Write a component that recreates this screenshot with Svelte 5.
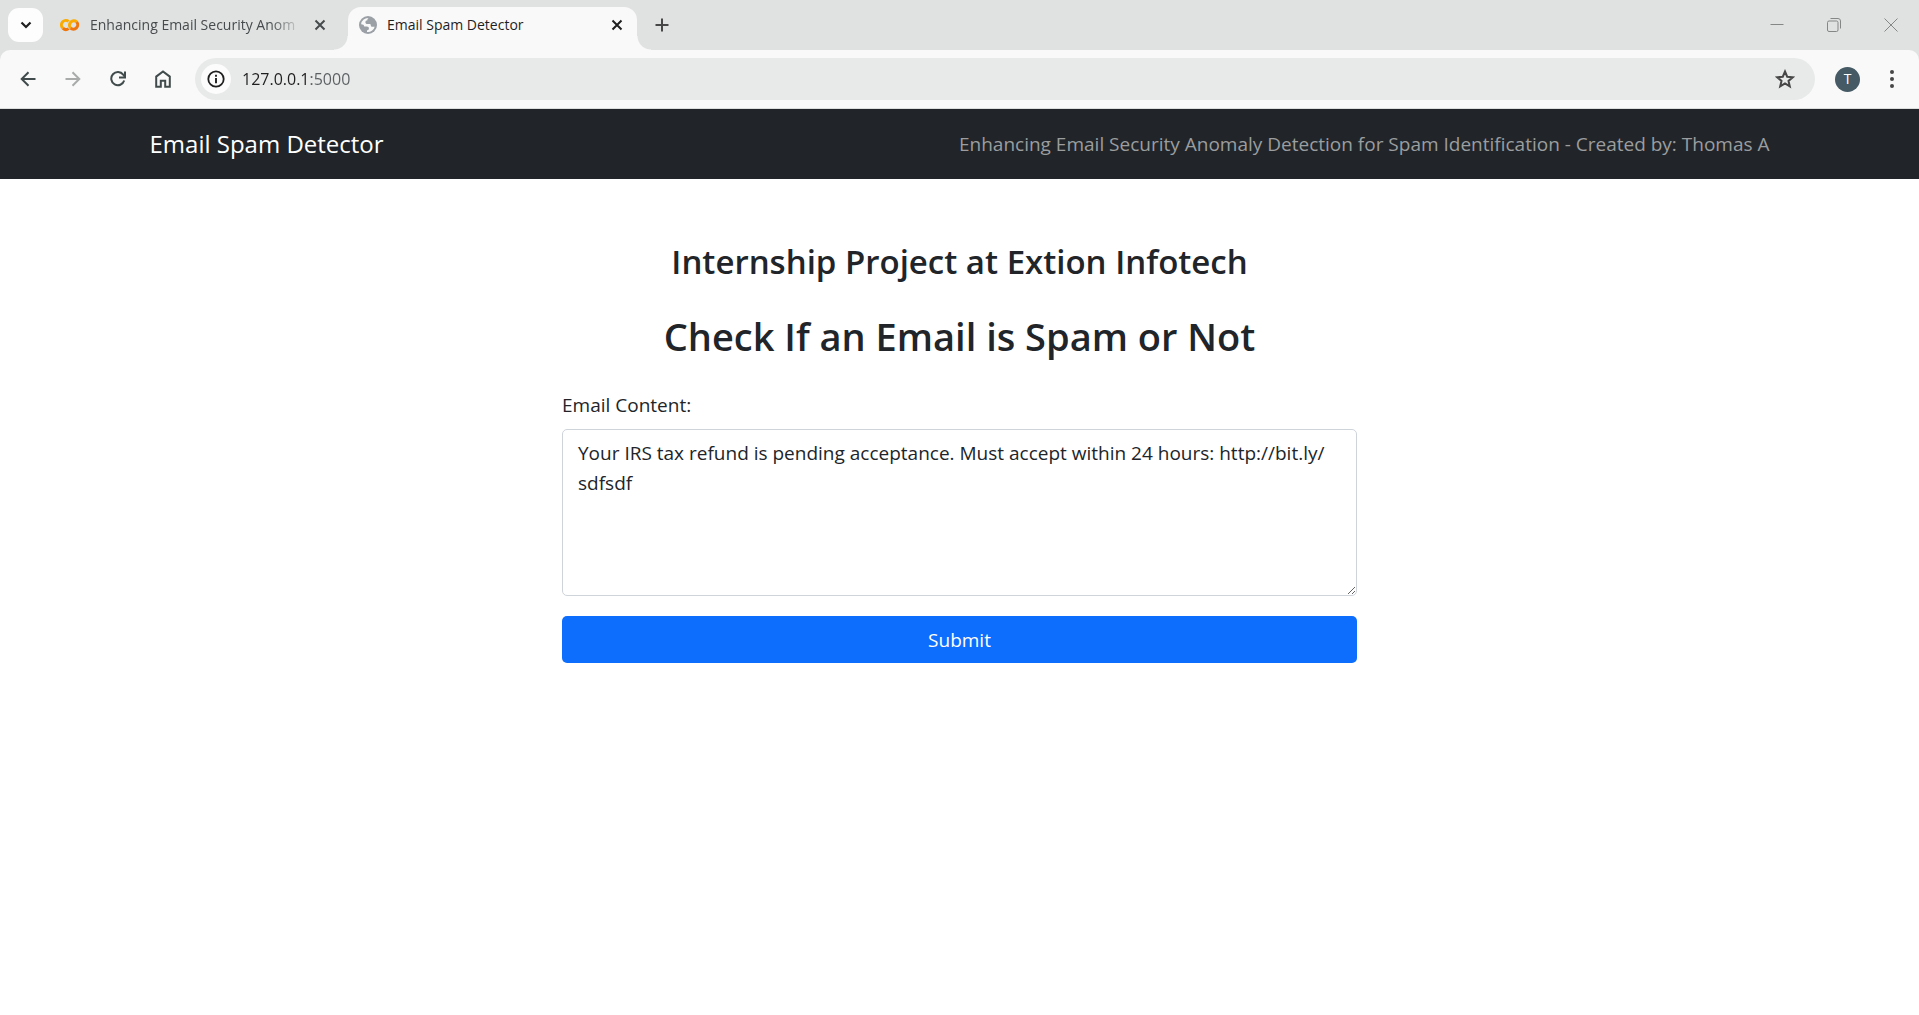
<script>
  let address = $state('127.0.0.1:5000');
  // The zero-width space lets the link wrap after its slash
  let content = $state(
    'Your IRS tax refund is pending acceptance. Must accept within 24 hours: http://bit.ly/\u200bsdfsdf'
  );
</script>

<div class="browser">
  <div class="tabstrip">
    <button class="tab-search" aria-label="Search tabs">
      <svg width="12" height="8" viewBox="0 0 12 8"><path d="M1.500 1.500 6 6l4.500-4.500" fill="none" stroke="#1f1f1f" stroke-width="2.200" /></svg>
    </button>

    <div class="tab">
      <button class="tab-label">
        <svg width="20" height="14" viewBox="0 0 20 14" fill="none" stroke-width="3">
          <path d="M8.600 3.400A4.400 4.400 0 0 0 2.900 10.100" stroke="#fbab00" />
          <path d="M2.900 10.100A4.400 4.400 0 0 0 8.600 10.600" stroke="#f0750a" />
          <path d="M10.500 10.100A4.400 4.400 0 0 1 16.700 3.900" stroke="#fbab00" />
          <path d="M10.500 10.100A4.400 4.400 0 0 0 16.700 3.900" stroke="#f0750a" />
        </svg>
        <span class="tab-title fade">Enhancing Email Security Anom</span>
      </button>
      <button class="close" aria-label="Close tab">
        <svg width="12" height="12" viewBox="0 0 12 12"><path d="M1.500 1.500l9 9M10.500 1.500l-9 9" stroke="currentColor" stroke-width="2" /></svg>
      </button>
    </div>

    <div class="tab active">
      <button class="tab-label">
        <svg width="18" height="18" viewBox="0 0 18 18">
          <circle cx="9" cy="9" r="9" fill="#9aa0a6" />
          <path d="M9.800 2.100C8.800 2.300 8.300 3.200 8.400 4.200c-1.200.1-2 .9-2 2 0 1.300 1 1.900 2.200 1.900h2c.9 0 1.200.6 1.200 1.300 0 .9.600 1.300 1.600 1.300h2.300A6.900 6.900 0 0 1 8 15.900v-1.700c1.200 0 1.900-.7 1.900-1.800 0-1.200-.8-1.900-2-1.900H5.200c0-1.500-1.200-2.300-3.100-2.300A6.900 6.900 0 0 1 9.800 2.100z" fill="#f9f9f9" />
        </svg>
        <span class="tab-title">Email Spam Detector</span>
      </button>
      <button class="close" aria-label="Close tab">
        <svg width="12" height="12" viewBox="0 0 12 12"><path d="M1.500 1.500l9 9M10.500 1.500l-9 9" stroke="currentColor" stroke-width="2" /></svg>
      </button>
    </div>

    <button class="new-tab" aria-label="New tab">
      <svg width="14" height="14" viewBox="0 0 14 14"><path d="M7 .5v13M.5 7h13" stroke="#474747" stroke-width="2" /></svg>
    </button>

    <div class="window-controls">
      <button aria-label="Minimize"><svg width="14" height="14" viewBox="0 0 14 14"><path d="M.5 6.500h13" /></svg></button>
      <button aria-label="Restore"><svg width="14" height="14" viewBox="0 0 14 14"><rect x=".5" y="3" width="10.500" height="10.500" rx="1.500" /><path d="M3.500.5H11a2.500 2.500 0 0 1 2.500 2.500v7.500" /></svg></button>
      <button aria-label="Close"><svg width="14" height="14" viewBox="0 0 14 14"><path d="M.5.5l13 13M13.500.5l-13 13" /></svg></button>
    </div>
  </div>

  <div class="toolbar">
    <button class="tool" aria-label="Back">
      <svg width="16" height="16" viewBox="0 0 16 16"><path d="M15.500 8H2M8.500 1.200 1.700 8l6.800 6.800" /></svg>
    </button>
    <button class="tool muted" aria-label="Forward">
      <svg width="16" height="16" viewBox="0 0 16 16"><path d="M.5 8H14M7.500 1.200 14.300 8l-6.800 6.800" /></svg>
    </button>
    <button class="tool" aria-label="Reload">
      <svg width="16" height="16" viewBox="0 0 16 16"><path d="M14.200 9.500A6.600 6.600 0 1 1 13.200 3.700L14.600 5.500" /><path d="M15 .5v6H9" /></svg>
    </button>
    <button class="tool" aria-label="Home">
      <svg width="16" height="18" viewBox="0 0 16 18"><path d="M1.200 16.700V6.600L8 1.400l6.800 5.200v10.100H10.200v-6H5.800v6z" /></svg>
    </button>

    <div class="omnibox">
      <button class="site-info" aria-label="View site information">
        <svg width="18" height="18" viewBox="0 0 18 18"><circle cx="9" cy="9" r="7.700" fill="none" stroke="#1f1f1f" stroke-width="1.800" /><path d="M9 8v5.200M9 4.800v2" stroke="#1f1f1f" stroke-width="1.900" /></svg>
      </button>
      <input aria-label="Address" type="text" bind:value={address} />
      <button class="star" aria-label="Bookmark this tab">
        <svg width="20" height="20" viewBox="0 0 20 20"><path d="M10 2.500l2.200 5.200 5.600.5-4.300 3.700 1.300 5.500L10 14.500l-4.800 2.900 1.300-5.500L2.200 8.200l5.600-.5z" fill="none" stroke="#474747" stroke-width="2" /></svg>
      </button>
    </div>

    <button class="avatar" aria-label="Profile">T</button>
    <button class="menu" aria-label="Menu">
      <svg width="4" height="18" viewBox="0 0 4 18" fill="#474747"><circle cx="2" cy="2" r="2" /><circle cx="2" cy="9" r="2" /><circle cx="2" cy="16" r="2" /></svg>
    </button>
  </div>
</div>

<nav class="navbar">
  <div class="container">
    <a class="brand" href="/">Email Spam Detector</a>
    <span class="credit">Enhancing Email Security Anomaly Detection for Spam Identification - Created by: Thomas A</span>
  </div>
</nav>

<main>
  <h2>Internship Project at Extion Infotech</h2>
  <h1>Check If an Email is Spam or Not</h1>
  <form onsubmit={(event) => event.preventDefault()}>
    <label for="email-content">Email Content:</label>
    <textarea id="email-content" rows="5" spellcheck="false" bind:value={content}></textarea>
    <button type="submit">Submit</button>
  </form>
</main>

<style>
  :global(body) {
    margin: 0;
    background: #fff;
    color: #212529;
    font-family: 'Segoe UI', 'Open Sans', 'Noto Sans', sans-serif;
    font-size: 19px;
    line-height: 30px;
  }

  button,
  input,
  textarea {
    font: inherit;
    color: inherit;
    margin: 0;
    padding: 0;
    border: 0;
    background: none;
    box-sizing: border-box;
  }

  svg {
    display: block;
    flex: none;
  }

  .browser button {
    display: flex;
    align-items: center;
    justify-content: center;
  }

  .browser {
    background: #e0e2e1;
    border-bottom: 1px solid #dcdedd;
    font-size: 14px;
    line-height: 20px;
  }

  .tabstrip {
    display: flex;
    align-items: center;
    height: 50px;
    padding-left: 8px;
  }

  .browser .tab-search {
    width: 35px;
    height: 34px;
    border-radius: 11px;
    background: #fdfdfd;
  }

  .tab {
    position: relative;
    display: flex;
    align-items: center;
    box-sizing: border-box;
    width: 289px;
    height: 43px;
    padding: 0 14px 7px 11px;
    align-self: flex-end;
    color: #474b4d;
  }

  .tab:not(.active) {
    margin-left: 6px;
    width: 299px;
    padding-right: 22px;
  }

  .tab.active {
    background: #f9f9f9;
    border-radius: 13px 13px 0 0;
    color: #1f1f1f;
  }

  /* Curved feet joining the active tab to the toolbar */
  .tab.active::before,
  .tab.active::after {
    content: '';
    position: absolute;
    bottom: 0;
    width: 14px;
    height: 14px;
  }

  .tab.active::before {
    right: 100%;
    background: radial-gradient(circle at 0 0, #e0e2e1 13px, #f9f9f9 14px);
  }

  .tab.active::after {
    left: 100%;
    background: radial-gradient(circle at 100% 0, #e0e2e1 13px, #f9f9f9 14px);
  }

  .browser .tab-label {
    flex: 1;
    min-width: 0;
    gap: 10px;
    justify-content: flex-start;
  }

  .tab-title {
    white-space: nowrap;
  }

  .fade {
    mask-image: linear-gradient(to right, #000 180px, transparent 212px);
  }

  .browser .close {
    width: 12px;
    height: 24px;
  }

  .browser .new-tab {
    width: 34px;
    height: 34px;
    margin-left: 8px;
  }

  .window-controls {
    display: flex;
    margin-left: auto;
  }

  .window-controls button {
    width: 57px;
    height: 48px;
  }

  .window-controls svg {
    fill: none;
    stroke: #858686;
  }

  .toolbar {
    display: flex;
    align-items: center;
    height: 58px;
    padding: 0 12px 0 5px;
    box-sizing: border-box;
    background: #f9f9f9;
    border-radius: 10px 10px 0 0;
  }

  .tool {
    width: 45px;
    height: 42px;
  }

  .tool svg {
    fill: none;
    stroke: #414b4b;
    stroke-width: 2;
  }

  .muted svg {
    stroke: #a9abab;
  }

  .omnibox {
    flex: 1;
    display: flex;
    align-items: center;
    height: 42px;
    margin-left: 10px;
    padding: 0 20px 0 6px;
    border-radius: 21px;
    background: #e8eae9;
    box-sizing: border-box;
  }

  .browser .site-info {
    width: 30px;
    height: 30px;
    border-radius: 50%;
    background: #fcfcfc;
  }

  .omnibox input {
    flex: 1;
    min-width: 0;
    height: 30px;
    margin-left: 11px;
    font-size: 16px;
    /* Host is dark, port is muted */
    color: transparent;
    caret-color: #1f1f1f;
    background: linear-gradient(to right, #1f1f1f 69px, #5b5f61 69px);
    background-clip: text;
  }

  .browser .avatar {
    width: 25px;
    height: 25px;
    margin-left: 20px;
    border-radius: 50%;
    background: #455a64;
    color: #fff;
    font-size: 14px;
  }

  .browser .menu {
    width: 30px;
    height: 42px;
    margin-left: 17px;
  }

  .navbar {
    background: #212529;
  }

  .container {
    display: flex;
    align-items: center;
    justify-content: space-between;
    box-sizing: border-box;
    max-width: 1650px;
    min-height: 70px;
    margin: 0 auto;
    padding: 0 15px;
  }

  .brand {
    color: #fff;
    font-size: 24px;
    text-decoration: none;
  }

  .credit {
    color: #9b9d9f;
  }

  main {
    box-sizing: border-box;
    width: 50%;
    max-width: 825px;
    margin: 0 auto;
    padding: 60px 15px;
  }

  h1,
  h2 {
    margin: 0;
    text-align: center;
    white-space: nowrap;
    font-weight: 600;
  }

  h2 {
    font-size: 33px;
    line-height: 45px;
  }

  h1 {
    margin-top: 28px;
    font-size: 38px;
    line-height: 48px;
  }

  form {
    display: flex;
    flex-direction: column;
    margin-top: 30px;
  }

  label {
    margin-bottom: 9px;
  }

  textarea {
    padding: 8px 15px 7px;
    border: 1px solid #ced4da;
    border-radius: 5px;
    background: #fff;
    resize: vertical;
  }

  form button {
    height: 47px;
    margin-top: 20px;
    border-radius: 5px;
    background: #0d6efd;
    color: #fff;
  }
</style>
